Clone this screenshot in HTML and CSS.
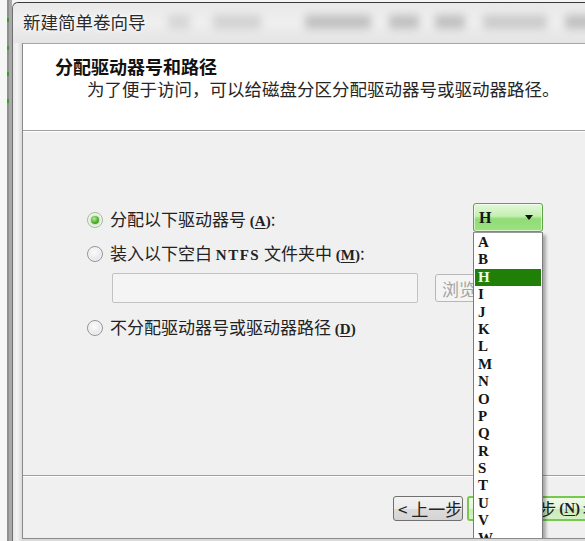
FILE: index.html
```html
<!DOCTYPE html>
<html lang="zh-CN">
<head>
<meta charset="utf-8">
<title>新建简单卷向导</title>
<link rel="stylesheet" href="styles.css">
</head>
<body>
<div class="screen">
  <div class="desk">
    <i class="mark m1"></i><i class="mark m2"></i><i class="mark m3"></i><i class="mark m4"></i>
  </div>
  <div class="window">
    <div class="titlebar">
      <span class="title">新建简单卷向导</span>
      <div class="ghosts">
        <span class="ghost g1"></span><span class="ghost g2"></span><span class="ghost g3"></span>
        <span class="ghost g4"></span><span class="ghost g5"></span><span class="ghost g6"></span><span class="ghost g7"></span>
      </div>
    </div>
    <div class="frame">
      <div class="client">
        <div class="header">
          <div class="h-title">分配驱动器号和路径</div>
          <div class="h-sub">为了便于访问，可以给磁盘分区分配驱动器号或驱动器路径。</div>
        </div>
        <div class="body">
          <div class="row row1">
            <div class="opt"><span class="radio on"></span><span class="lbl">分配以下驱动器号 <span class="lat">(<u>A</u>)</span>:</span></div>
            <div class="select">
              <span class="sel-val">H</span><span class="caret"></span>
              <ul class="droplist">
                <li>A</li><li>B</li><li class="hi">H</li><li>I</li><li>J</li><li>K</li><li>L</li><li>M</li><li>N</li><li>O</li><li>P</li><li>Q</li><li>R</li><li>S</li><li>T</li><li>U</li><li>V</li><li>W</li>
              </ul>
            </div>
          </div>
          <div class="row row2">
            <div class="opt"><span class="radio"></span><span class="lbl">装入以下空白 <span class="lat ntfs">NTFS</span> 文件夹中 <span class="lat">(<u>M</u>)</span>:</span></div>
          </div>
          <div class="row row-path">
            <div class="textbox"></div>
            <div class="btn browse">浏览...</div>
          </div>
          <div class="row row3">
            <div class="opt"><span class="radio"></span><span class="lbl">不分配驱动器号或驱动器路径 <span class="lat">(<u>D</u>)</span></span></div>
          </div>
        </div>
        <div class="footer">
          <div class="btn back">&lt; 上一步</div>
          <div class="btn next">下一步 <span class="lat">(<u>N</u>)</span> &gt;</div>
        </div>
      </div>
    </div>
  </div>
</div>
</body>
</html>
```
FILE: styles.css
```css
* { box-sizing: border-box; }
html, body { margin: 0; padding: 0; }
body {
  width: 585px;
  height: 541px;
  overflow: hidden;
  background: #f4f4f4;
  font-family: "Noto Sans CJK SC", "Noto Sans", sans-serif;
  color: #1e1e1e;
}
.screen {
  display: flex;
  width: 585px;
  height: 541px;
  overflow: hidden;
}
.desk {
  position: relative;
  width: 12px;
  flex: 0 0 12px;
  background: linear-gradient(to right, #f6f6f6 0 7px, #8f8f8f 7px 9px, #a9a9a9 9px 12px);
}
.mark {
  position: absolute;
  left: 7px;
  width: 2px;
  height: 4px;
  background: #3f9a2e;
}
.m1 { top: 18px; }
.m2 { top: 46px; }
.m3 { top: 72px; }
.m4 { top: 99px; }

.window {
  flex: 0 0 auto;
  width: 600px;
  margin-top: 2px;
  border-top: 1px solid #3a3a3a;
  border-left: 1px solid #707070;
  border-radius: 6px 0 0 0;
  background: linear-gradient(to right, #e6e6e6, #f4f4f4 4px, #dadada 9px);
}
.titlebar {
  position: relative;
  height: 40px;
  padding-left: 10px;
  display: flex;
  align-items: center;
  background: linear-gradient(to bottom, #e9e9e9, #efefef 50%, #e4e4e4);
  border-radius: 6px 0 0 0;
}
.title {
  position: relative;
  z-index: 1;
  font-size: 17.5px;
  line-height: 22px;
  color: #2a2a2a;
  text-shadow: 0 0 6px #fff, 0 0 3px #fff;
  margin-top: -2px;
}
.ghosts {
  position: absolute;
  inset: 0;
  overflow: hidden;
}
.ghost {
  position: absolute;
  top: 12px;
  height: 14px;
  background: #a8a8a8;
  filter: blur(4px);
  opacity: .65;
}
.g1 { left: 155px; width: 22px; opacity: .35; }
.g2 { left: 200px; width: 48px; opacity: .4; }
.g3 { left: 292px; width: 66px; }
.g4 { left: 376px; width: 30px; }
.g5 { left: 422px; width: 30px; }
.g6 { left: 470px; width: 64px; opacity: .5; }
.g7 { left: 552px; width: 40px; }

.frame {
  padding-left: 9px;
}
.client {
  width: 563px;
  height: 496px;
  border-top: 1px solid #a6a6a6;
  border-left: 1px solid #8a8a8a;
  border-bottom: 1px solid #8a8a8a;
  background: #f0f0f0;
  overflow: hidden;
}
.header {
  height: 87px;
  background: #fff;
  border-bottom: 1px solid #a0a0a0;
  padding-top: 11px;
}
.h-title {
  padding-left: 32px;
  font-size: 18px;
  font-weight: bold;
  line-height: 22px;
  color: #111;
}
.h-sub {
  padding-left: 64px;
  font-size: 17.5px;
  line-height: 23px;
  color: #262626;
}
.body {
  height: 345px;
  border-top: 1px solid #fff;
  padding: 71px 42px 0 64px;
  border-bottom: 1px solid #a0a0a0;
}
.row {
  display: flex;
  align-items: center;
}
.row1 { height: 29px; }
.row2 { height: 20px; margin-top: 12px; }
.row-path { height: 30px; margin-top: 9px; padding-left: 25px; }
.row3 { height: 20px; margin-top: 15px; }
.opt {
  display: flex;
  align-items: center;
  gap: 7px;
}
.row1 .opt { margin-top: 4px; }
.lbl {
  font-size: 17px;
  line-height: 20px;
  white-space: nowrap;
  color: #222;
}
.lat {
  font-family: "Liberation Serif", serif;
  font-weight: bold;
  font-size: 15px;
}
.ntfs { letter-spacing: 1.5px; }
.lat u { text-decoration: underline; text-underline-offset: 2px; }
.radio {
  position: relative;
  width: 16px;
  height: 16px;
  flex: 0 0 16px;
  border-radius: 50%;
  border: 1px solid #959595;
  background: radial-gradient(circle at 45% 40%, #fdfdfd, #e9e9e9 55%, #cdcdcd);
  box-shadow: inset 0 0 0 1px #f7f7f7;
}
.radio.on {
  border-color: #9fbf93;
}
.radio.on::after {
  content: "";
  position: absolute;
  left: 3px;
  top: 3px;
  width: 8px;
  height: 8px;
  border-radius: 50%;
  background: radial-gradient(circle at 40% 35%, #b8f09a, #4cae27 55%, #2f8a15);
  box-shadow: 0 0 2px #7cc862;
}
.select {
  position: relative;
  margin-left: auto;
  width: 70px;
  height: 29px;
  border: 1px solid #5fa545;
  border-radius: 3px;
  background: linear-gradient(to bottom, #e3f8d8, #c4efb2 45%, #8fdc74 55%, #9ee285);
  box-shadow: inset 0 0 0 1px rgba(255,255,255,.6);
  display: flex;
  align-items: center;
  padding-left: 5px;
}
.sel-val {
  font-family: "Liberation Serif", serif;
  font-weight: bold;
  font-size: 16px;
  color: #151515;
}
.caret {
  margin-left: auto;
  margin-right: 9px;
  width: 0;
  height: 0;
  border-left: 4.5px solid transparent;
  border-right: 4.5px solid transparent;
  border-top: 5px solid #111;
}
.droplist {
  position: absolute;
  z-index: 5;
  top: 28px;
  left: -1px;
  width: 70px;
  margin: 0;
  padding: 1px 1px 0;
  list-style: none;
  background: #fff;
  border: 1px solid #7b7b7b;
  border-top: 1px solid #9a9a9a;
  box-shadow: 3px 3px 3px rgba(0,0,0,.3);
}
.droplist li {
  height: 17.4px;
  line-height: 17.4px;
  padding-left: 3px;
  overflow: hidden;
  font-family: "Liberation Serif", serif;
  font-weight: bold;
  font-size: 15px;
  color: #151515;
}
.droplist li.hi {
  background: #1f7f07;
  color: #e8ffe0;
}
.textbox {
  width: 306px;
  height: 30px;
  border: 1px solid #c2c2c2;
  border-radius: 2px;
  background: #f4f4f4;
}
.btn {
  display: flex;
  align-items: center;
  white-space: nowrap;
  border-radius: 3px;
  font-size: 17px;
}
.browse {
  margin-left: 17px;
  width: 76px;
  height: 28px;
  padding-left: 6px;
  border: 1px solid #b7b7b7;
  background: #f4f4f4;
  color: #a4a4a4;
}
.footer {
  border-top: 1px solid #fff;
  display: flex;
  padding: 19px 0 0 370px;
  gap: 4px;
}
.back {
  width: 84px;
  height: 25px;
  padding-left: 4px;
  border: 1px solid #707070;
  background: linear-gradient(to bottom, #f3f3f3, #ebebeb 50%, #dcdcdc 51%, #d4d4d4);
  color: #222;
}
.next {
  width: 130px;
  height: 25px;
  padding-left: 36px;
  gap: 3px;
  border: 2px solid #78c84e;
  background: linear-gradient(to bottom, #effbe9, #e3f5da 50%, #c9ebb7 51%, #d5f0c6);
  color: #222;
}
```
